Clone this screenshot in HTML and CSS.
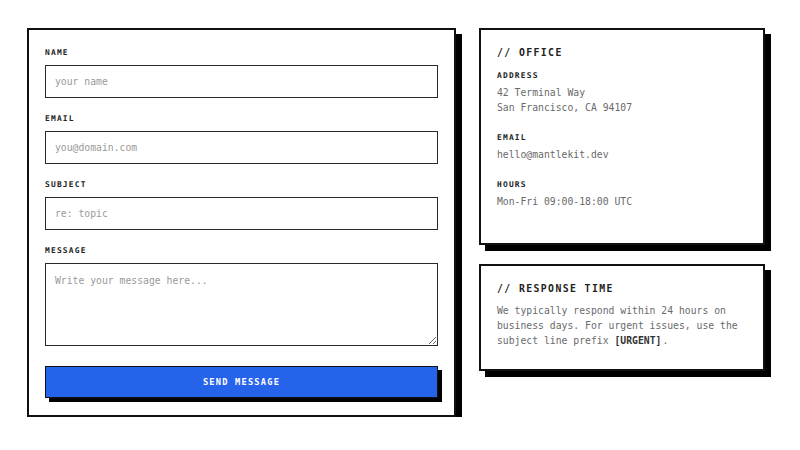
FILE: index.html
```html
<!DOCTYPE html>
<html>
<head>
<meta charset="utf-8">
<link rel="stylesheet" href="styles.css">
</head>
<body>
<div class="page">
  <form class="card form-card">
    <div class="field">
      <label class="label">NAME</label>
      <input class="input" type="text" placeholder="your_name">
    </div>
    <div class="field">
      <label class="label">EMAIL</label>
      <input class="input" type="text" placeholder="you@domain.com">
    </div>
    <div class="field">
      <label class="label">SUBJECT</label>
      <input class="input" type="text" placeholder="re: topic">
    </div>
    <div class="field">
      <label class="label">MESSAGE</label>
      <textarea class="input textarea" placeholder="Write your message here..."></textarea>
    </div>
    <button class="send" type="button">SEND MESSAGE</button>
  </form>
  <div class="side">
    <div class="card info-card">
      <h2 class="heading">// OFFICE</h2>
      <div class="section">
        <div class="label small">ADDRESS</div>
        <div class="text">42 Terminal Way<br>San Francisco, CA 94107</div>
      </div>
      <div class="section">
        <div class="label small">EMAIL</div>
        <div class="text">hello@mantlekit.dev</div>
      </div>
      <div class="section">
        <div class="label small">HOURS</div>
        <div class="text">Mon-Fri 09:00-18:00 UTC</div>
      </div>
    </div>
    <div class="card response-card">
      <h2 class="heading tight">// RESPONSE TIME</h2>
      <p class="text para">We typically respond within 24 hours on business days. For urgent issues, use the subject line prefix <span class="nowrap"><strong class="strong">[URGENT]</strong>.</span></p>
    </div>
  </div>
</div>
</body>
</html>
```

FILE: styles.css
```css
* { box-sizing: border-box; }
html, body { margin: 0; padding: 0; background: #fff; }
body {
  font-family: "DejaVu Sans Mono", "Liberation Mono", monospace;
  font-size: 9.75px;
  color: #666;
}
.page {
  width: 800px;
  padding: 28px 0 0 27px;
  display: grid;
  grid-template-columns: 429px 286px;
  column-gap: 23px;
  align-items: start;
}
.card {
  background: #fff;
  border: 2px solid #111;
  box-shadow: 6px 6px 0 #000;
  padding: 16px;
}
.form-card { margin: 0; padding-bottom: 17px; }
.field { margin-bottom: 14px; }
.label {
  display: block;
  font-weight: bold;
  font-size: 7.9px;
  letter-spacing: 1.2px;
  color: #222;
  line-height: 14px;
  margin-bottom: 5px;
}
.input {
  display: block;
  width: 100%;
  height: 33px;
  border: 1.5px solid #2a2a2a;
  border-radius: 0;
  background: #fff;
  padding: 0 9px;
  font-family: inherit;
  font-size: 9.75px;
  color: #333;
  outline: none;
}
.input::placeholder { color: #9a9a9a; }
.textarea {
  height: 83px;
  padding: 9px 9px;
  line-height: 15px;
  resize: vertical;
}
.field:last-of-type { margin-bottom: 20px; }
.send {
  display: block;
  width: 100%;
  height: 32px;
  background: #2563eb;
  border: 1.5px solid #111;
  box-shadow: 4px 4px 0 #000;
  color: #fff;
  font-family: inherit;
  font-weight: bold;
  font-size: 8.7px;
  letter-spacing: 1.2px;
  padding: 0;
  cursor: pointer;
}
.side {
  display: flex;
  flex-direction: column;
  gap: 19px;
}
.info-card { padding-top: 17px; padding-bottom: 17px; }
.response-card { padding-top: 17px; }
.heading {
  margin: 0 0 11px;
  font-size: 9.8px;
  font-weight: bold;
  letter-spacing: 1.4px;
  line-height: 12px;
  color: #222;
}
.heading.tight { margin-bottom: 8px; }
.label.small {
  line-height: 12px;
  margin-bottom: 3px;
}
.section { margin-bottom: 17px; }
.text {
  line-height: 15px;
  color: #6a6a6a;
}
.para { margin: 0 0 5px; }
.strong { color: #333; font-weight: bold; margin-right: 1px; }
.nowrap { white-space: nowrap; }
```
